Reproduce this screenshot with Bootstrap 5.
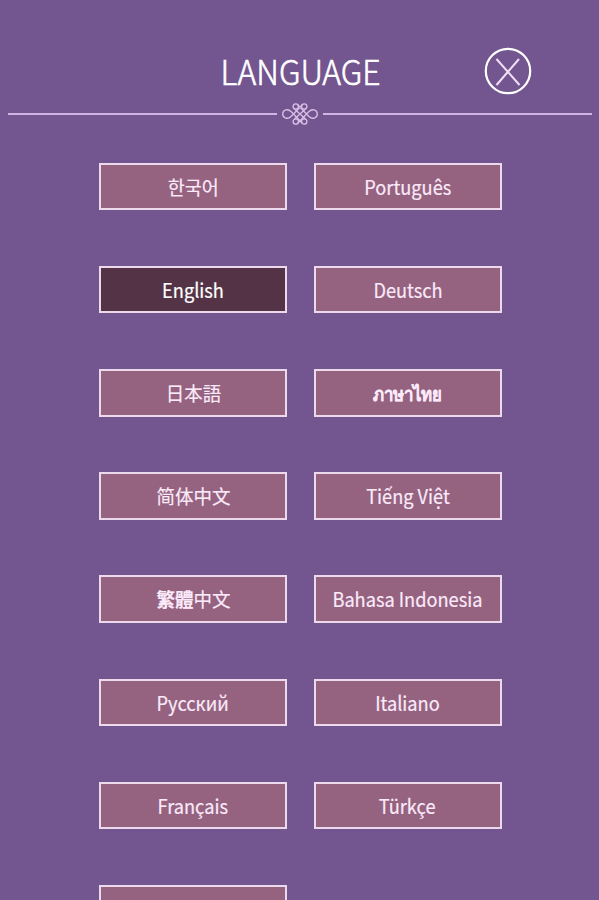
<!DOCTYPE html>
<html lang="en">
<head>
<meta charset="utf-8">
<meta name="viewport" content="width=device-width, initial-scale=1">
<title>Language</title>
<link href="https://cdn.jsdelivr.net/npm/bootstrap@5.3.0/dist/css/bootstrap.min.css" rel="stylesheet">
<style>
body{background:#73558f;font-family:"Noto Sans CJK KR","Noto Sans",sans-serif;height:900px}
.head-row{height:101px;padding-top:42px;display:grid;grid-template-columns:1fr auto 1fr}
.head-title{font-size:34px;line-height:58px;font-weight:300;color:#fff;margin:0;grid-column:2;-webkit-text-stroke:.6px #fff}
.head-title span,.lang-btn span{display:inline-block}
.head-title span{transform:translateX(1.5px) scaleX(.94);margin:0 -8px}
.close-btn{grid-column:3;justify-self:end;width:48px;height:48px;margin:5px 67px 0 0}
.rule{height:2px;background:#cfb5e4}
.divider{height:26px;padding:0 7px 0 8px;gap:4px}
.lang-grid{display:grid;grid-template-columns:188px 188px;column-gap:27px;grid-auto-rows:47.6px;row-gap:55.6px;margin:35.6px 0 0 98.6px}
.lang-btn{--bs-btn-bg:#95627f;--bs-btn-color:#fbeafa;--bs-btn-border-color:#ecd9ec;--bs-btn-border-width:2px;--bs-btn-border-radius:0;--bs-btn-padding-y:0;--bs-btn-padding-x:0;--bs-btn-font-size:20px;--bs-btn-line-height:43.600px;--bs-btn-hover-bg:#85536f;--bs-btn-hover-color:#fff;--bs-btn-hover-border-color:#fff;--bs-btn-active-bg:#543347;--bs-btn-active-color:#fff;--bs-btn-active-border-color:#ecd9ec;white-space:nowrap}
.lang-btn span{transform:translateY(.3px) scaleX(.91);-webkit-text-stroke:.2px}
.lang-btn:lang(ko) span,.lang-btn:lang(ja) span,.lang-btn:lang(zh) span{transform:translate(.6px,.5px) scale(.925,.94)}
.lang-btn:lang(th) span{transform:translateY(.5px) scale(.84,.93)}
</style>
</head>
<body class="overflow-hidden">
<header>
<div class="head-row">
<h1 class="head-title"><span>LANGUAGE</span></h1>
<button class="close-btn btn p-0 border-0" aria-label="Close"><svg class="d-block" width="48" height="48" viewBox="0 0 48 48" fill="none" stroke="#fff"><circle cx="24" cy="24" r="22.2" stroke-width="2.2"/><path d="M12.500 12 35.500 38M35 12 12.500 38" stroke-width="2" stroke="#f0dff8"/></svg></button>
</div>
<div class="divider d-flex align-items-center">
<div class="rule flex-fill"></div>
<svg width="38" height="26" viewBox="-19 -13 38 26" fill="none" stroke="#d8c0e6" stroke-width="1.3">
<circle cx="-4.200" cy="-7.500" r="2.700"/><circle cx="4.200" cy="-7.500" r="2.700"/><circle cx="-4.200" cy="7.500" r="2.700"/><circle cx="4.200" cy="7.500" r="2.700"/>
<path d="M-6.500 0-9 2.500C-12 5.500-17.300 4.500-17.300 0S-12-5.500-9-2.500L-6.500 0 2.300 9.300M-6.500 0 2.300-9.300M6.500 0 9 2.500C12 5.500 17.300 4.500 17.300 0S12-5.500 9-2.500L6.500 0-2.300 9.300M6.500 0-2.300-9.300M-5.500-5 5.500 5M5.500-5-5.500 5"/>
</svg>
<div class="rule flex-fill"></div>
</div>
</header>
<main class="lang-grid">
<button class="btn lang-btn" lang="ko"><span>한국어</span></button>
<button class="btn lang-btn" lang="pt"><span>Português</span></button>
<button class="btn lang-btn active" lang="en"><span>English</span></button>
<button class="btn lang-btn" lang="de"><span>Deutsch</span></button>
<button class="btn lang-btn" lang="ja"><span>日本語</span></button>
<button class="btn lang-btn fw-bold" lang="th"><span>ภาษาไทย</span></button>
<button class="btn lang-btn" lang="zh-Hans"><span>简体中文</span></button>
<button class="btn lang-btn" lang="vi"><span>Tiếng Việt</span></button>
<button class="btn lang-btn" lang="zh-Hant"><span><b>繁體</b>中文</span></button>
<button class="btn lang-btn" lang="id"><span>Bahasa Indonesia</span></button>
<button class="btn lang-btn" lang="ru"><span>Русский</span></button>
<button class="btn lang-btn" lang="it"><span>Italiano</span></button>
<button class="btn lang-btn" lang="fr"><span>Français</span></button>
<button class="btn lang-btn" lang="tr"><span>Türkçe</span></button>
<button class="btn lang-btn" lang="es"></button>
</main>
<script src="https://cdn.jsdelivr.net/npm/bootstrap@5.3.0/dist/js/bootstrap.bundle.min.js"></script>
</body>
</html>
